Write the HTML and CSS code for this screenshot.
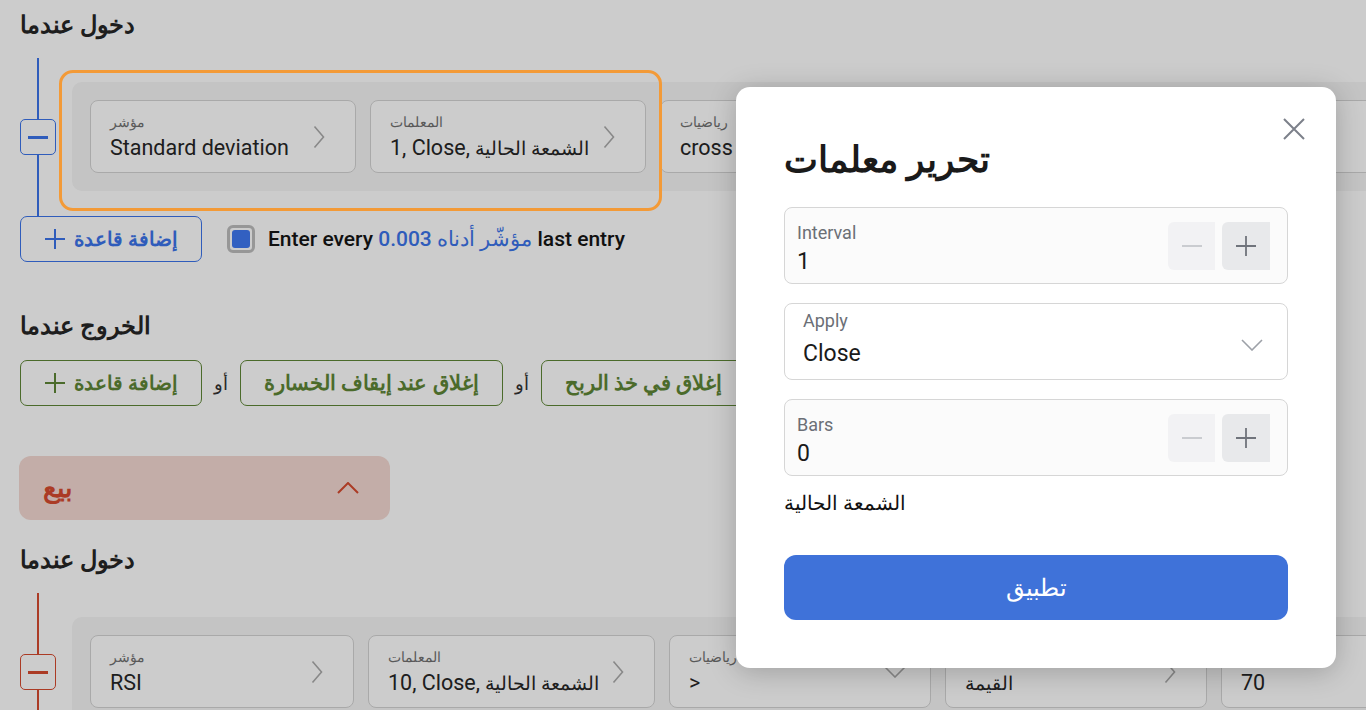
FILE: index.html
```html
<!DOCTYPE html>
<html lang="ar">
<head>
<meta charset="utf-8">
<title>تحرير معلمات</title>
<link rel="stylesheet" href="styles.css">
</head>
<body>
<main class="page">
  <h2 class="heading">دخول عندما</h2>
  <div class="rule-area buy">
    <div class="rail"><span class="rail-line"></span><span class="rail-btn"></span><span class="rail-line"></span></div>
    <div class="rule-box">
      <div class="card w-266">
        <div><div class="card-label">مؤشر</div><div class="card-value">Standard deviation</div></div>
        <svg class="chev-r" viewBox="0 0 12 24"><polyline points="1.5,1.5 10.5,12 1.5,22.5"/></svg>
      </div>
      <div class="card w-276">
        <div><div class="card-label">المعلمات</div><div class="card-value">1, Close, <span class="ar">الشمعة الحالية</span></div></div>
        <svg class="chev-r" viewBox="0 0 12 24"><polyline points="1.5,1.5 10.5,12 1.5,22.5"/></svg>
      </div>
      <div class="card w-262">
        <div><div class="card-label">رياضيات</div><div class="card-value">cross</div></div>
        <svg class="chev-d" viewBox="0 0 22 12"><polyline points="1,1 11,11 21,1"/></svg>
      </div>
      <div class="card w-262"></div>
      <div class="card w-262"></div>
    </div>
  </div>
  <div class="actions">
    <button class="add-btn buy-btn"><svg class="plus" viewBox="0 0 22 22"><path d="M11 1v20M1 11h20"/></svg><span>إضافة قاعدة</span></button>
    <div class="entry">
      <span class="check"><span class="check-fill"></span></span>
      <span class="entry-text">Enter every <span class="hl">0.003 مؤشّر أدناه</span> last entry</span>
    </div>
  </div>

  <h2 class="heading exit-heading">الخروج عندما</h2>
  <div class="exit-row">
    <button class="add-btn exit-btn"><svg class="plus" viewBox="0 0 22 22"><path d="M11 1v20M1 11h20"/></svg><span>إضافة قاعدة</span></button>
    <span class="or">أو</span>
    <button class="exit-btn pill">إغلاق عند إيقاف الخسارة</button>
    <span class="or">أو</span>
    <button class="exit-btn pill">إغلاق في خذ الربح</button>
  </div>

  <div class="sell">
    <span class="sell-text">بيع</span>
    <svg class="chev-up" viewBox="0 0 22 12"><polyline points="1,11 11,1 21,11"/></svg>
  </div>

  <h2 class="heading sell-heading">دخول عندما</h2>
  <div class="rule-area sellc">
    <div class="rail"><span class="rail-line"></span><span class="rail-btn"></span><span class="rail-line"></span></div>
    <div class="rule-box">
      <div class="card w-264">
        <div><div class="card-label">مؤشر</div><div class="card-value">RSI</div></div>
        <svg class="chev-r" viewBox="0 0 12 24"><polyline points="1.5,1.5 10.5,12 1.5,22.5"/></svg>
      </div>
      <div class="card w-287">
        <div><div class="card-label">المعلمات</div><div class="card-value">10, Close, <span class="ar">الشمعة الحالية</span></div></div>
        <svg class="chev-r" viewBox="0 0 12 24"><polyline points="1.5,1.5 10.5,12 1.5,22.5"/></svg>
      </div>
      <div class="card w-262">
        <div><div class="card-label">رياضيات</div><div class="card-value">&gt;</div></div>
        <svg class="chev-d" viewBox="0 0 22 12"><polyline points="1,1 11,11 21,1"/></svg>
      </div>
      <div class="card w-262">
        <div><div class="card-label">مقارنة</div><div class="card-value"><span class="ar">القيمة</span></div></div>
        <svg class="chev-r" viewBox="0 0 12 24"><polyline points="1.5,1.5 10.5,12 1.5,22.5"/></svg>
      </div>
      <div class="card w-262">
        <div><div class="card-label">القيمة</div><div class="card-value">70</div></div>
      </div>
    </div>
  </div>
</main>

<div class="overlay"></div>
<div class="highlight"></div>

<div class="modal">
  <svg class="close" viewBox="0 0 24 24"><path d="M2 2l20 20M22 2L2 22"/></svg>
  <h1 class="modal-title">تحرير معلمات</h1>

  <div class="field stepper-field first">
    <div class="field-text">
      <div class="field-label">Interval</div>
      <div class="field-value">1</div>
    </div>
    <div class="stepper">
      <span class="step minus"><svg viewBox="0 0 22 22"><path d="M1 11h20"/></svg></span>
      <span class="step plusb"><svg viewBox="0 0 22 22"><path d="M11 1v20M1 11h20"/></svg></span>
    </div>
  </div>

  <div class="field select-field">
    <div class="field-text">
      <div class="field-label">Apply</div>
      <div class="field-value">Close</div>
    </div>
    <svg class="sel-chev" viewBox="0 0 22 12"><polyline points="1,1 11,11 21,1"/></svg>
  </div>

  <div class="field stepper-field">
    <div class="field-text">
      <div class="field-label">Bars</div>
      <div class="field-value">0</div>
    </div>
    <div class="stepper">
      <span class="step minus"><svg viewBox="0 0 22 22"><path d="M1 11h20"/></svg></span>
      <span class="step plusb"><svg viewBox="0 0 22 22"><path d="M11 1v20M1 11h20"/></svg></span>
    </div>
  </div>

  <p class="note">الشمعة الحالية</p>
  <button class="apply">تطبيق</button>
</div>
</body>
</html>
```

FILE: styles.css
```css
* { box-sizing: border-box; }
html, body { margin: 0; }
body {
  width: 1366px;
  height: 710px;
  overflow: hidden;
  position: relative;
  background: #fff;
  color: #262626;
  font-family: Roboto, sans-serif;
}
button { font-family: inherit; }

.page { padding: 11px 0 0 20px; }

.heading {
  margin: 0;
  font-size: 23.5px;
  line-height: 28px;
  font-weight: 700;
  color: #262626;
}

.buy { --c: #3b74ea; }
.sellc { --c: #d64a2f; }

.rule-area { display: flex; gap: 16px; margin-top: 19px; }
.rail { width: 36px; flex: none; display: flex; flex-direction: column; align-items: center; }
.rail-line { flex: 1; width: 2px; background: var(--c); }
.rail-btn {
  width: 36px; height: 36px;
  border: 1.5px solid var(--c);
  border-radius: 5px;
  background: #fff;
  display: flex; align-items: center; justify-content: center;
}
.rail-btn::before { content: ""; width: 20px; height: 3px; background: var(--c); }

.rule-box {
  flex: 1;
  min-width: 0;
  margin: 24px 0 25px;
  background: #f5f5f5;
  border-radius: 10px 0 0 10px;
  padding: 18px;
  display: flex;
  gap: 14px;
  overflow: hidden;
}
.card {
  flex: none;
  height: 73px;
  background: #fff;
  border: 1px solid #d4d4d4;
  border-radius: 8px;
  display: flex;
  align-items: center;
  justify-content: space-between;
  padding: 0 30px 0 19px;
  white-space: nowrap;
}
.w-262 { width: 262px; }
.w-264 { width: 264px; }
.w-266 { width: 266px; }
.w-276 { width: 276px; }
.w-287 { width: 287px; }
.card-label { font-size: 14px; line-height: 20px; color: #707070; }
.card-value { font-size: 21.5px; line-height: 26px; margin-top: 3px; color: #262626; }
.card-value .ar { font-size: 0.88em; }
.chev-r { width: 12px; height: 24px; fill: none; stroke: #ababab; stroke-width: 1.6; }
.chev-d { width: 22px; height: 12px; fill: none; stroke: #ababab; stroke-width: 1.6; margin-right: -6px; }

.actions { display: flex; align-items: center; gap: 25px; height: 46px; }
.add-btn {
  width: 182px;
  height: 46px;
  background: #fff;
  border: 1px solid currentColor;
  border-radius: 7px;
  display: flex;
  align-items: center;
  justify-content: center;
  gap: 8px;
  font-size: 20px;
  font-weight: 700;
  padding: 0;
}
.buy-btn { color: #3b74ea; }
.plus { width: 22px; height: 22px; fill: none; stroke: currentColor; stroke-width: 2; }

.entry { display: flex; align-items: center; gap: 13px; }
.check {
  width: 28px; height: 28px;
  border: 3px solid #bdbdbd;
  border-radius: 6px;
  padding: 2px;
  background: #fff;
}
.check-fill { display: block; width: 100%; height: 100%; background: #3f78f2; border-radius: 3px; }
.entry-text { font-size: 21px; font-weight: 500; color: #141414; }
.hl { color: #3b74ea; }

.exit-heading { margin-top: 50px; }
.exit-row { display: flex; align-items: center; gap: 10px; margin-top: 20px; height: 46px; }
.exit-btn { color: #5e8636; }
.pill {
  height: 46px;
  background: #fff;
  border: 1px solid currentColor;
  border-radius: 7px;
  padding: 0 23px;
  font-size: 21px;
  font-weight: 700;
  white-space: nowrap;
}
.or { font-size: 18px; color: #333; margin: 0 2px; }

.sell {
  margin-top: 50px;
  width: 371px;
  height: 64px;
  margin-left: -1px;
  background: #f4d9d2;
  border-radius: 12px;
  display: flex;
  align-items: center;
  justify-content: space-between;
  padding: 0 31px 0 24px;
}
.sell-text { font-size: 27px; font-weight: 700; color: #d64a2f; }
.chev-up { width: 22px; height: 12px; fill: none; stroke: #d64a2f; stroke-width: 2; }

.sell-heading { margin-top: 26px; }

.overlay { position: absolute; inset: 0; background: rgba(0, 0, 0, 0.2); }
.highlight {
  position: absolute;
  left: 59px; top: 70px;
  width: 603px; height: 141px;
  border: 3px solid #f39a37;
  border-radius: 14px;
}

.modal {
  position: absolute;
  left: 736px; top: 87px;
  width: 600px; height: 581px;
  background: #fff;
  border-radius: 14px;
  padding: 53px 48px 48px;
  box-shadow: 0 4px 28px rgba(0, 0, 0, 0.22);
}
.close {
  position: absolute;
  top: 30px; right: 30px;
  width: 24px; height: 24px;
  fill: none; stroke: #7c808a; stroke-width: 2;
}
.modal-title {
  margin: 0;
  font-size: 36px;
  line-height: 40px;
  font-weight: 700;
  color: #1a1a1a;
}
.field {
  height: 77px;
  border: 1px solid #d6d6d6;
  border-radius: 8px;
  display: flex;
  align-items: center;
  justify-content: space-between;
  margin-top: 19px;
}
.field.first { margin-top: 27px; }
.field-text { align-self: flex-start; }
.field-label { font-size: 18px; line-height: 22px; color: #6b6f76; }
.field-value { font-size: 23px; line-height: 28px; color: #1a1a1a; }
.stepper-field { background: #fbfbfb; padding: 0 17px 0 12px; }
.stepper-field .field-text { padding-top: 14px; }
.stepper-field .field-value { margin-top: 4px; }
.select-field { background: #fff; padding: 0 24px 0 18px; }
.select-field .field-text { padding-top: 6px; }
.select-field .field-value { margin-top: 8px; }
.sel-chev { width: 22px; height: 12px; fill: none; stroke: #9da1a8; stroke-width: 1.6; margin-top: 6px; }

.stepper { display: flex; gap: 7px; }
.step {
  width: 48px; height: 48px;
  border-radius: 6px 0 0 6px;
  display: flex; align-items: center; justify-content: center;
}
.step svg { width: 22px; height: 22px; fill: none; stroke-width: 1.8; }
.minus { background: #f2f2f4; width: 47px; }
.minus svg { stroke: #c6c8cc; }
.plusb { background: #e8e9eb; }
.plusb svg { stroke: #70747c; }

.note { margin: 15px 0 0; font-size: 20px; line-height: 24px; color: #111; }
.apply {
  display: block;
  width: 100%;
  height: 65px;
  margin-top: 40px;
  border: 0;
  border-radius: 12px;
  background: #3f72d9;
  color: #fff;
  font-size: 24px;
  font-weight: 500;
}
```
